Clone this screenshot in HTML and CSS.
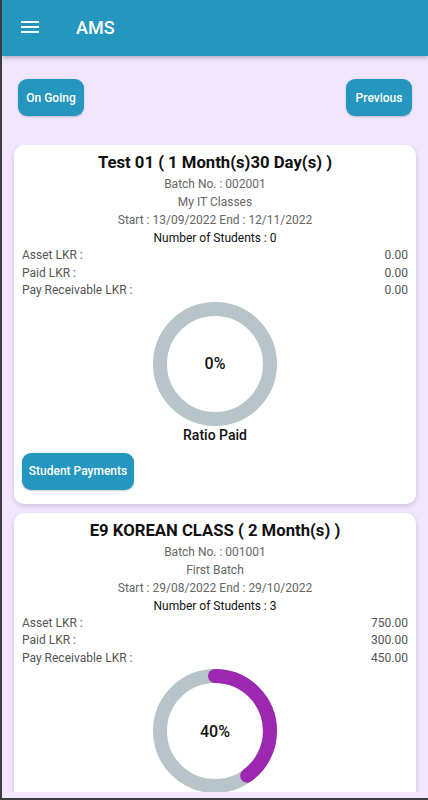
FILE: index.html
```html
<!DOCTYPE html>
<html lang="en">
<head>
    <meta charset="UTF-8">
    <meta name="viewport" content="width=device-width, initial-scale=1.0">
    <title>AMS</title>
    <link rel="stylesheet" href="styles.css">
</head>
<body>
    <div class="screen">

        <header class="appbar">
            <svg class="menu-icon" viewBox="0 0 24 24" width="24" height="24">
                <path d="M3 18h18v-2H3v2zm0-5h18v-2H3v2zm0-7v2h18V6H3z" fill="#fff"/>
            </svg>
            <h1>AMS</h1>
        </header>

        <div class="tabs">
            <button class="btn">On Going</button>
            <button class="btn">Previous</button>
        </div>

        <div class="list">

            <div class="card">
                <h2>Test 01 ( 1 Month(s)30 Day(s) )</h2>
                <p class="sub">Batch No. : 002001</p>
                <p class="sub">My IT Classes</p>
                <p class="sub">Start : 13/09/2022 End : 12/11/2022</p>
                <p class="count">Number of Students : 0</p>
                <div class="row"><span>Asset LKR :</span><span>0.00</span></div>
                <div class="row"><span>Paid LKR :</span><span>0.00</span></div>
                <div class="row"><span>Pay Receivable LKR :</span><span>0.00</span></div>
                <div class="donut">
                    <svg viewBox="0 0 124 124" width="124" height="124">
                        <circle cx="62" cy="62" r="55" class="track"/>
                    </svg>
                    <span class="pct">0%</span>
                </div>
                <p class="ratio">Ratio Paid</p>
                <button class="btn">Student Payments</button>
            </div>

            <div class="card">
                <h2>E9 KOREAN CLASS ( 2 Month(s) )</h2>
                <p class="sub">Batch No. : 001001</p>
                <p class="sub">First Batch</p>
                <p class="sub">Start : 29/08/2022 End : 29/10/2022</p>
                <p class="count">Number of Students : 3</p>
                <div class="row"><span>Asset LKR :</span><span>750.00</span></div>
                <div class="row"><span>Paid LKR :</span><span>300.00</span></div>
                <div class="row"><span>Pay Receivable LKR :</span><span>450.00</span></div>
                <div class="donut">
                    <svg viewBox="0 0 124 124" width="124" height="124">
                        <circle cx="62" cy="62" r="55" class="track"/>
                        <!-- 40% of 2*pi*55 -->
                        <circle cx="62" cy="62" r="55" class="bar" stroke-dasharray="138.2 345.6" transform="rotate(-90 62 62)"/>
                    </svg>
                    <span class="pct">40%</span>
                </div>
                <p class="ratio">Ratio Paid</p>
                <button class="btn">Student Payments</button>
            </div>

        </div>
    </div>
</body>
</html>
```

FILE: styles.css
```css
body {
    margin: 0;
    font-family: Roboto, "Noto Sans", sans-serif;
    background-color: #f1e6fd;
}

.screen {
    height: 800px;
    box-sizing: border-box;
    border-left: 2px solid #3b3b40;
    border-bottom: 2px solid #3b3b40;
    display: flex;
    flex-direction: column;
    overflow: hidden;
}


.appbar {
    height: 56px;
    flex-shrink: 0;
    background-color: #2596be;
    display: flex;
    align-items: center;
    padding-left: 16px;
    box-shadow: 0 2px 4px rgba(0, 0, 0, 0.25);
    position: relative;
    z-index: 1;
}

.menu-icon {
    margin-top: -2px;
}

.appbar h1 {
    margin: -2px 0 0 34px;
    color: #fff;
    font-size: 18px;
    font-weight: 500;
}


.tabs {
    display: flex;
    justify-content: space-between;
    padding: 23px 16px 0;
    flex-shrink: 0;
}

.btn {
    font-family: inherit;
    height: 37px;
    padding: 0;
    border: none;
    border-radius: 9px;
    background-color: #2596be;
    color: #fff;
    font-size: 12px;
    font-weight: 500;
    white-space: nowrap;
    box-shadow: 0 1px 2px rgba(0, 0, 0, 0.2);
}

.tabs .btn {
    width: 66px;
}


.list {
    flex: 1;
    overflow: hidden;
    margin: 29px 0 6px;
    padding: 0 12px;
    display: flex;
    flex-direction: column;
    gap: 9px;
}

.card {
    flex-shrink: 0;
    background-color: #fff;
    border-radius: 10px;
    padding: 6px 8px 14px;
    box-shadow: 0 2px 5px rgba(60, 30, 90, 0.18);
}

.card h2 {
    margin: 0;
    text-align: center;
    font-size: 16.7px;
    font-weight: 700;
    line-height: 24px;
    color: #111;
}

.card p {
    margin: 0;
    text-align: center;
    font-size: 12px;
    line-height: 18px;
}

.sub {
    color: #666;
}

.count {
    color: #111;
}

.row {
    display: flex;
    justify-content: space-between;
    font-size: 12px;
    line-height: 17.5px;
    color: #555;
}


.donut {
    position: relative;
    width: 124px;
    height: 124px;
    margin: 2px auto 0;
}

.donut svg {
    display: block;
}

.track {
    fill: none;
    stroke: #b7c5ca;
    stroke-width: 14;
}

.bar {
    fill: none;
    stroke: #9c27b0;
    stroke-width: 14;
    stroke-linecap: round;
}

.pct {
    position: absolute;
    inset: 0;
    display: flex;
    align-items: center;
    justify-content: center;
    font-size: 16px;
    font-weight: 500;
    color: #111;
}

.card .ratio {
    font-size: 14px;
    font-weight: 500;
    color: #111;
}

.card .btn {
    margin-top: 9px;
    width: 112px;
}
```
